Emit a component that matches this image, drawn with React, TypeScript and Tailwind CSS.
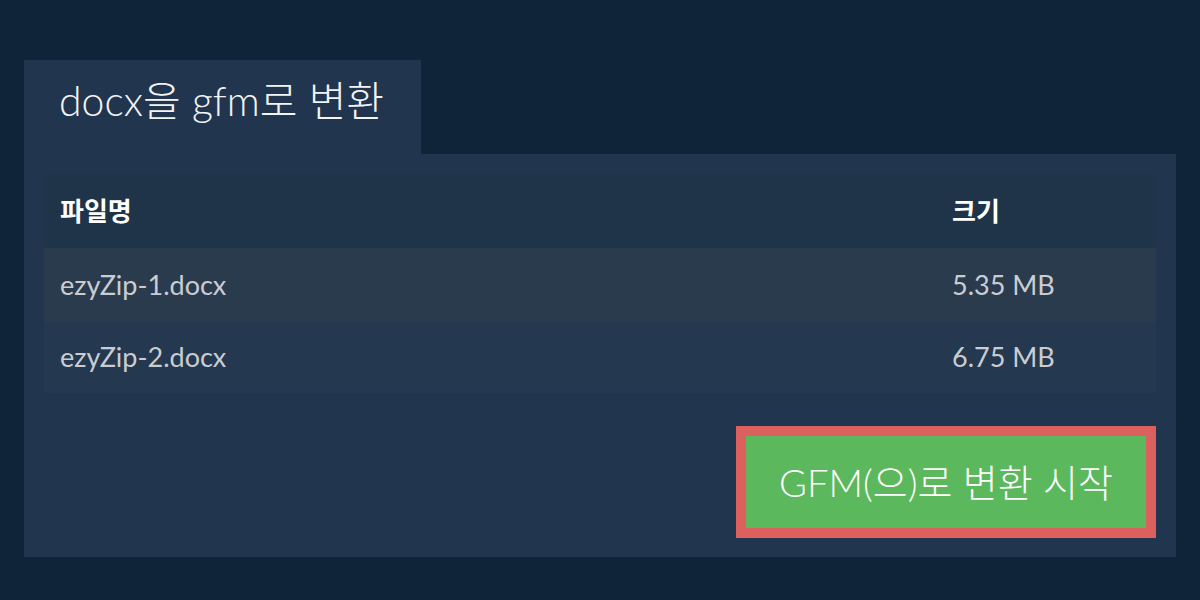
const font = { fontFamily: 'Lato, "Noto Sans CJK KR", sans-serif' }

const files = [
  { name: 'ezyZip-1.docx', size: '5.35 MB' },
  { name: 'ezyZip-2.docx', size: '6.75 MB' },
]

export default function App() {
  return (
    <div className="w-[1200px] h-[600px] bg-[#0f2339] pt-[60px] px-6" style={font}>
      {/* Tab */}
      <div className="w-[397px] h-[94px] bg-[#21364e] pl-[35px] pt-[15px]">
        <h1 className="text-[41px] font-light text-[#f2f4f6] leading-[52px]">docx을 gfm로 변환</h1>
      </div>

      {/* Panel */}
      <div className="bg-[#21364e] pt-[21px] px-5 pb-5 h-[403px]">
        <table className="w-full border-collapse">
          <thead>
            <tr className="bg-[#1f3349] h-[73px]">
              <th className="text-left pl-4 text-[26px] font-bold text-white">파일명</th>
              <th className="text-left w-[204px] text-[26px] font-bold text-white">크기</th>
            </tr>
          </thead>
          <tbody>
            {files.map((f, i) => (
              <tr key={f.name} className={i === 0 ? 'bg-[#2b3b4e] h-[74px]' : 'bg-[#24384f] h-[71px]'}>
                <td className="pl-4 text-[27px] text-[#c9cdd3]">{f.name}</td>
                <td className="text-[27px] text-[#c9cdd3]">{f.size}</td>
              </tr>
            ))}
          </tbody>
        </table>

        <div className="flex justify-end mt-[33px]">
          <button className="w-[420px] h-[112px] bg-[#5cb85c] border-[10px] border-[#dc605d] text-white text-[38px] font-light">
            GFM(으)로 변환 시작
          </button>
        </div>
      </div>
    </div>
  )
}
